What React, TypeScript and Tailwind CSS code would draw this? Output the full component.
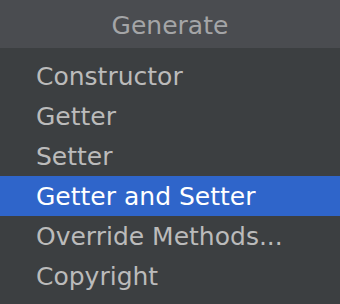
import React from "react";

const items = [
  "Constructor",
  "Getter",
  "Setter",
  "Getter and Setter",
  "Override Methods...",
  "Copyright",
];

export default function App() {
  const selected = 3;

  return (
    <div
      className="w-[340px] h-[304px] bg-[#3c3f41] flex flex-col overflow-hidden"
      style={{ fontFamily: '"DejaVu Sans", "Lucida Grande", sans-serif' }}
    >
      <div className="h-[48px] bg-[#4a4c50] flex items-center justify-center pt-[4px] text-[25px] text-[#a4a5a7]">
        Generate
      </div>
      <div className="flex flex-col pt-[8px]">
        {items.map((item, index) => (
          <div
            key={item}
            className={`h-[40px] flex items-center pl-[36px] pt-[1px] text-[25px] ${
              index === selected
                ? "bg-[#2f65ca] text-white"
                : "text-[#bbbbbb]"
            }`}
          >
            {item}
          </div>
        ))}
      </div>
    </div>
  );
}
